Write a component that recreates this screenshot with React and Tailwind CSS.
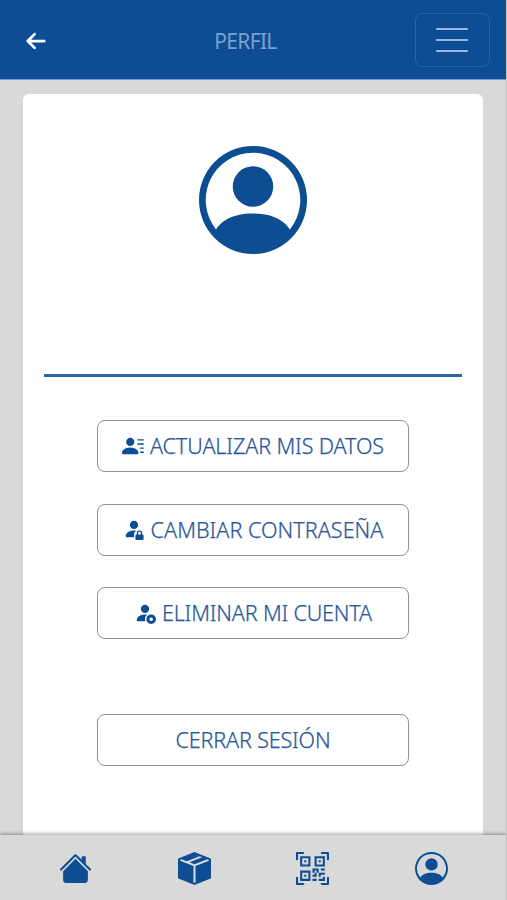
import React from 'react';
import { FaArrowLeft } from 'react-icons/fa6';
import {
    BsBoxSeamFill,
    BsHouseFill,
    BsPersonCircle,
    BsPersonFillLock,
    BsPersonLinesFill,
    BsQrCodeScan,
} from 'react-icons/bs';

// person with a ring badge in the lower right corner
function PersonBadgeIcon({ size, className }) {
    return (
        <svg viewBox="0 0 16 16" width={size} height={size} fill="currentColor" className={className}>
            <path d="M11 5a3 3 0 1 1-6 0 3 3 0 0 1 6 0m-9 8c0 1 1 1 1 1h5.256A4.5 4.5 0 0 1 8 12.5a4.5 4.5 0 0 1 1.544-3.393Q8.844 9.002 8 9c-5 0-6 3-6 4" />
            <circle cx="12.5" cy="12.5" r="2.4" fill="none" stroke="currentColor" strokeWidth="2.2" />
        </svg>
    );
}

const actions = [
    { label: 'ACTUALIZAR MIS DATOS', icon: BsPersonLinesFill, spacing: 'tracking-[-0.1px]' },
    { label: 'CAMBIAR CONTRASEÑA', icon: BsPersonFillLock, spacing: 'tracking-[0.05px]' },
    { label: 'ELIMINAR MI CUENTA', icon: PersonBadgeIcon, spacing: 'tracking-[-0.15px]' },
];

const tabs = [
    { label: 'Inicio', icon: BsHouseFill },
    { label: 'Paquetes', icon: BsBoxSeamFill },
    { label: 'Escanear', icon: BsQrCodeScan },
    { label: 'Perfil', icon: BsPersonCircle },
];

function Header() {
    return (
        <header className="flex h-20 shrink-0 items-center justify-between border-b border-[#6f9bcb] bg-[#0d4d94] pl-6 pr-4">
            <button aria-label="Volver" className="w-[75px] pl-px pt-[3px] text-white">
                <FaArrowLeft size={22} />
            </button>
            <h1 className="mr-[23px] pt-1 text-[21px] tracking-[-0.7px] text-[#7d9fcb]">PERFIL</h1>
            <button
                aria-label="Menú"
                className="flex h-[54px] w-[75px] flex-col items-center justify-center gap-[8.5px] rounded-lg border border-[#2a62a2] pt-px"
            >
                <span className="h-[2.5px] w-8 rounded-full bg-[#9db7da]" />
                <span className="h-[2.5px] w-8 rounded-full bg-[#9db7da]" />
                <span className="h-[2.5px] w-8 rounded-full bg-[#9db7da]" />
            </button>
        </header>
    );
}

function ActionButton({ label, icon: Icon, spacing }) {
    return (
        <button className="flex h-[52px] w-[312px] items-center justify-center gap-1.5 rounded-lg border-[1.5px] border-[#8f9394] pt-px text-[21.5px] font-light text-[#2a5799] [-webkit-text-stroke:0.25px_#2a5799]">
            {Icon && <Icon size={22} className="mb-0.5 text-[#0d4d94]" />}
            <span className={`whitespace-nowrap ${spacing}`}>{label}</span>
        </button>
    );
}

export default function App() {
    return (
        <div className="flex h-[900px] w-[507px] flex-col overflow-hidden border-r border-[#c4c4c4] bg-[#d9d9d9] font-['Noto_Sans','Open_Sans',sans-serif]">
            <Header />
            <main className="min-h-0 flex-1 px-[23px] pt-3.5">
                <section className="flex h-full flex-col items-center rounded-t-md bg-white px-[21px] pt-[52px]">
                    <BsPersonCircle size={108} className="shrink-0 text-[#0d4d94]" />
                    <hr className="mt-[120px] w-full border-t-[3px] border-[#2f65a5]" />
                    <div className="mt-[43px] flex flex-col gap-[31.5px]">
                        {actions.map(action => (
                            <ActionButton key={action.label} {...action} />
                        ))}
                    </div>
                    <div className="mt-[75px]">
                        <ActionButton label="CERRAR SESIÓN" spacing="tracking-[-0.15px]" />
                    </div>
                </section>
            </main>
            <nav className="z-10 grid h-[65px] shrink-0 grid-cols-[119px_118px_119px_118px] justify-center bg-[#d9d9d9] pt-px shadow-[0_-1px_4px_rgba(0,0,0,0.4)]">
                {tabs.map(({ label, icon: Icon }) => (
                    <button key={label} aria-label={label} className="flex items-center justify-center text-[#0d4d94]">
                        <Icon size={33} />
                    </button>
                ))}
            </nav>
        </div>
    );
}
